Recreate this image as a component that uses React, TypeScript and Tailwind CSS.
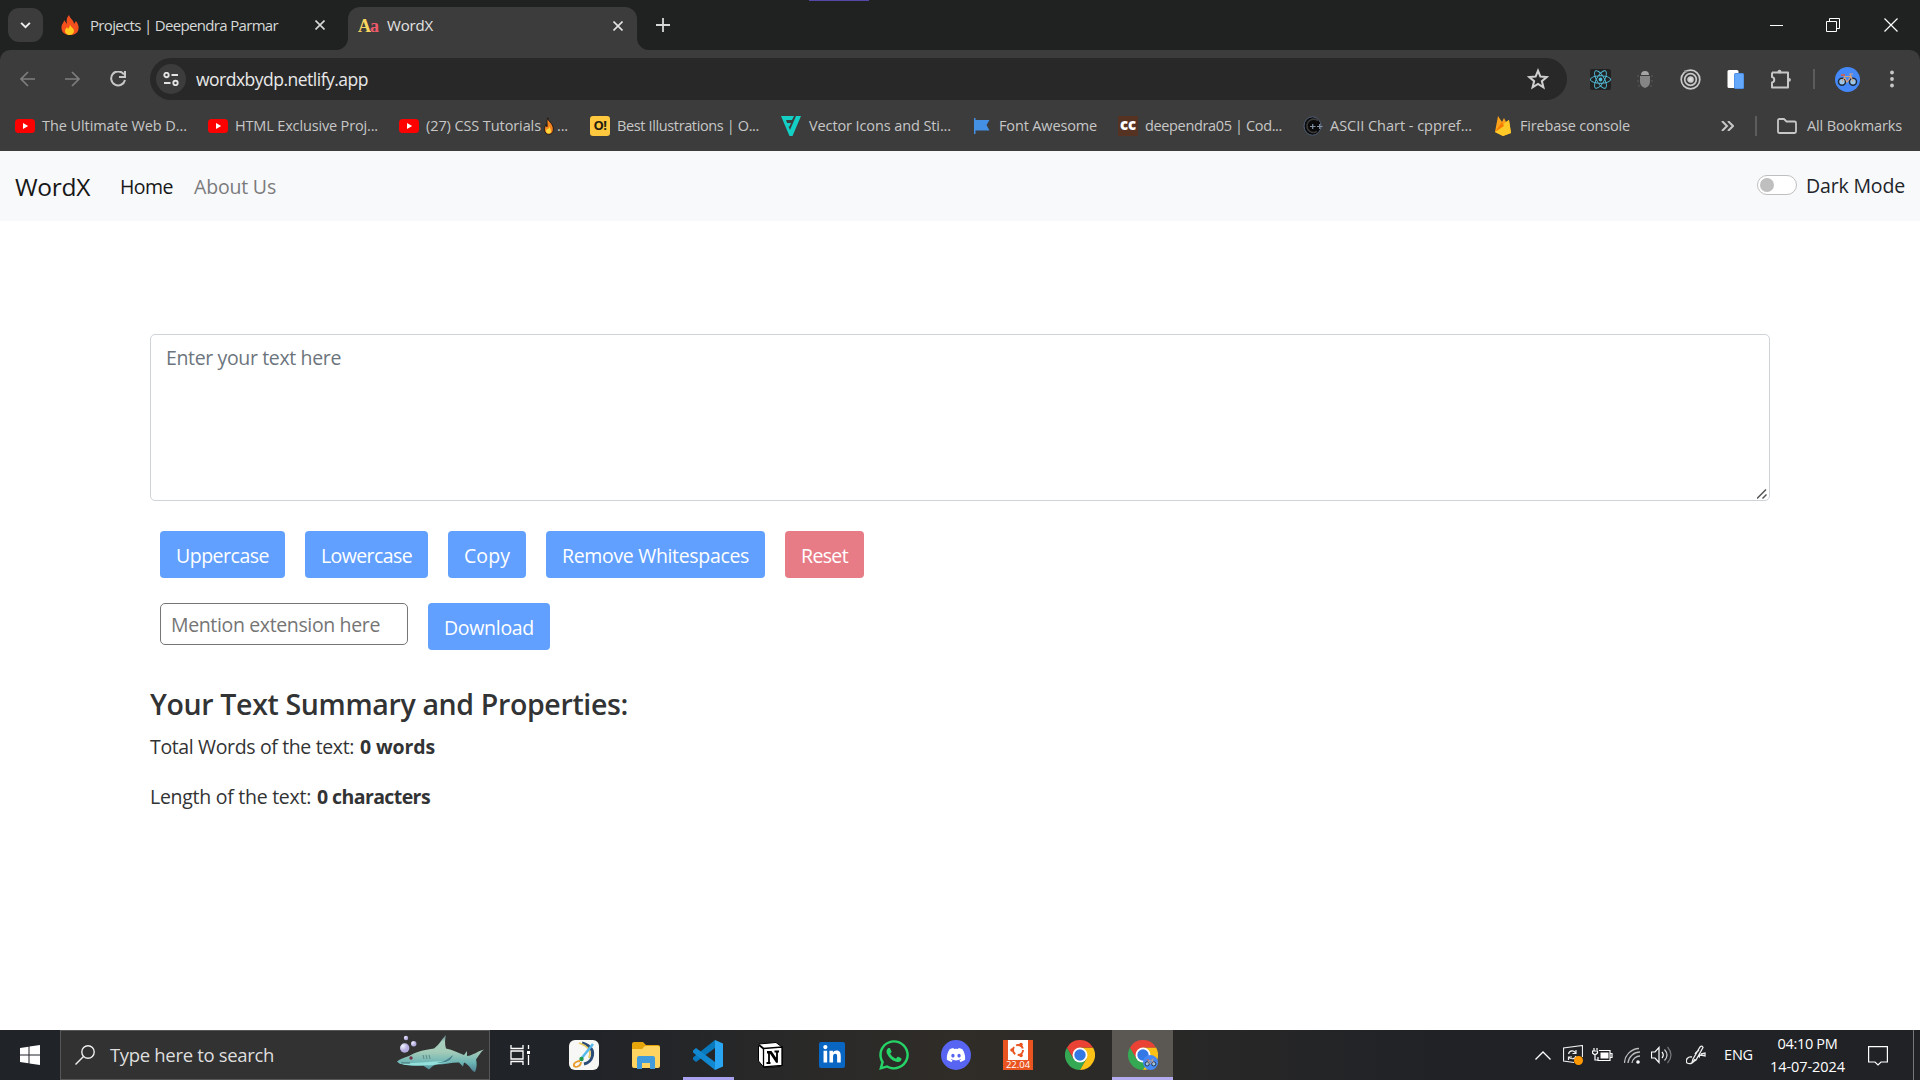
import React, { useLayoutEffect, useRef, useState } from 'react';
import { FaDiscord, FaLinkedinIn, FaReact, FaWhatsapp } from 'react-icons/fa';

/* Single line label whose tracking adapts to the width of its box. */
function Fit({ children, className }: { children: string; className: string }) {
  const box = useRef<HTMLSpanElement>(null);
  const text = useRef<HTMLSpanElement>(null);
  const [track, setTrack] = useState(0);
  useLayoutEffect(() => {
    if (!box.current || !text.current) return;
    const gap = box.current.clientWidth - text.current.getBoundingClientRect().width;
    setTrack(gap / children.length);
  }, [children]);
  return (
    <span ref={box} className={'block shrink-0 whitespace-nowrap ' + className}>
      <span ref={text} style={{ letterSpacing: track + 'px' }}>{children}</span>
    </span>
  );
}

function Fire({ className }: { className: string }) {
  return (
    <svg viewBox="0 0 18 20" className={className}>
      <path d="M8 0c1 4 5 5 5 9l2-3c2 3 3 5 2.500 8-.6 4-4 6-8.500 6S.500 17.500.500 13 3 8 3 5l3 4C5 5 6 2 8 0z" fill="#f4501e" />
      <path d="M9 9c0 3 4 4 4 7 0 2-2 4-4.500 4S4 18 4 16c0-2 1.500-2.500 2-4l1 2c1-1 2-3 2-5z" fill="#ffc81f" />
    </svg>
  );
}

function OutlinedFire({ className }: { className: string }) {
  return (
    <svg viewBox="0 0 13 22" className={className} stroke="#111" strokeWidth="1">
      <path d="M5 1c0 4 5 6 6 10 2 5 0 10-4.500 10S0 17 1.500 12L3 9l1 3C5 9 3 5 5 1z" fill="#f5811f" />
      <path d="M7 11c0 3 2.500 4 2 7-1 3-5 3-6 0-.5-2 1-3 1-4l1 1c1-1 2-2 2-4z" fill="#ffd93b" stroke="none" />
    </svg>
  );
}

function Cross({ className }: { className: string }) {
  return (
    <svg viewBox="0 0 10 10" className={className} stroke="currentColor" strokeWidth="1.600">
      <path d="M.5.5l9 9M9.500.5l-9 9" />
    </svg>
  );
}

function TabStrip() {
  return (
    <div className="relative flex h-[50px] items-center bg-[#1f2221] text-[#d6d8d8]">
      <div className="absolute left-[809px] top-0 h-px w-[60px] bg-[#5646a8]" />
      <div className="ml-2 flex h-[34px] w-[35px] items-center justify-center rounded-[11px] bg-[#3c3c3c]">
        <svg viewBox="0 0 12 8" className="h-[7px] w-[11px]" fill="none" stroke="#eee" strokeWidth="2.200"><path d="M1 1l5 5 5-5" /></svg>
      </div>
      <div className="ml-[18px] flex w-[287px] items-center">
        <Fire className="h-5 w-[18px]" />
        <Fit className="ml-[11px] w-[188px] text-[15px]">Projects | Deependra Parmar</Fit>
        <Cross className="ml-[37px] size-[10px]" />
      </div>
      <div className="relative mt-[7px] flex h-[43px] w-[289px] items-center self-start rounded-t-[12px] bg-[#3c3c3c] pb-[8px] pt-[2px] text-[#e3e3e3]">
        <svg viewBox="0 0 12 12" className="absolute -left-3 bottom-0 size-3"><path d="M12 0v12H0A12 12 0 0 0 12 0z" fill="#3c3c3c" /></svg>
        <svg viewBox="0 0 12 12" className="absolute -right-3 bottom-0 size-3"><path d="M0 0v12h12A12 12 0 0 1 0 0z" fill="#3c3c3c" /></svg>
        <span className="ml-[10px] w-5 whitespace-nowrap font-['Liberation_Serif'] text-[18px] font-bold leading-none tracking-[-1px] text-[#f7d560]">A<span className="text-[#ee5a6c]">a</span></span>
        <Fit className="ml-[9px] w-[46px] text-[15px]">WordX</Fit>
        <Cross className="ml-[180px] size-[10px]" />
      </div>
      <svg viewBox="0 0 14 14" className="ml-[19px] size-[14px]" stroke="#d6d8d8" strokeWidth="1.800"><path d="M7 0v14M0 7h14" /></svg>
      <div className="ml-auto mr-[22px] flex items-center text-white">
        <div className="h-px w-[13px] bg-white" />
        <svg viewBox="0 0 14 14" className="ml-[43px] size-[14px]" fill="none" stroke="currentColor"><path d="M.5 3.500h10v10H.5zM3.500 3V.5h10v10h-3" /></svg>
        <svg viewBox="0 0 14 14" className="ml-[44px] size-[14px]" stroke="currentColor" strokeWidth="1.200"><path d="M.5.5l13 13M13.500.5l-13 13" /></svg>
      </div>
    </div>
  );
}

function Bike() {
  return (
    <svg viewBox="0 0 25 25" className="size-[25px]">
      <circle cx="12.500" cy="12.500" r="12.500" fill="#4489f7" />
      <g fill="#9cc7ea" stroke="#1d2b3c" strokeWidth="1.500"><circle cx="7" cy="14.800" r="3.500" /><circle cx="18" cy="14.800" r="3.500" /></g>
      <path d="M7 14.500l3-5h6l-4 5.500L9 9M18 14.500L15 7h3" fill="none" stroke="#d5a07a" strokeWidth="1.200" />
      <path d="M6 8h4" stroke="#e45735" strokeWidth="1.500" />
    </svg>
  );
}

function Toolbar() {
  return (
    <div className="flex h-[58px] items-center text-[#c7c7c7]">
      <svg viewBox="0 0 16 16" className="ml-5 size-4" fill="none" stroke="#7d7d7d" strokeWidth="1.700"><path d="M15 8H1.500M8 1L1 8l7 7" /></svg>
      <svg viewBox="0 0 16 16" className="ml-[28px] size-4" fill="none" stroke="#7d7d7d" strokeWidth="1.700"><path d="M1 8h13.500M8 1l7 7-7 7" /></svg>
      <svg viewBox="0 0 16 16" className="ml-[30px] size-4" fill="none" stroke="currentColor" strokeWidth="2"><path d="M14 3.500A7 7 0 1 0 15 9M15 0v6H9" /></svg>
      <div className="ml-[24px] flex h-[42px] w-[1417px] items-center rounded-full bg-[#282828]">
        <div className="ml-[6px] flex size-[30px] items-center justify-center rounded-full bg-[#3c3c3c]">
          <svg viewBox="0 0 16 14" className="h-[14px] w-4" fill="none" stroke="#e3e3e3" strokeWidth="1.900"><circle cx="3.500" cy="3" r="2.200" /><path d="M8.500 3H15M1 11h6.500" /><circle cx="12.500" cy="11" r="2.200" /></svg>
        </div>
        <Fit className="ml-[10px] w-[172px] text-[17.500px] text-[#e8e8e8]">wordxbydp.netlify.app</Fit>
        <svg viewBox="0 0 24 24" className="ml-auto mr-[18px] size-[22px]" fill="none" stroke="#d0d0d0" strokeWidth="2.200"><path d="M12 3l2.600 6.400 6.900.5-5.300 4.400 1.700 6.700L12 17.300 6.100 21l1.700-6.700L2.500 9.900l6.900-.5z" /></svg>
      </div>
      <div className="ml-[23px] flex size-[21px] items-center justify-center rounded-[2px] bg-[#222]"><FaReact className="size-[21px] text-[#53c1de]" /></div>
      <svg viewBox="0 0 16 20" className="ml-[26px] h-5 w-4"><path d="M4 6a4 4 0 0 1 8 0z" fill="#a5a5a5" /><path d="M3 7h10v5c0 4-2 6-5 7-3-1-5-3-5-7z" fill="#858585" /><path d="M0 7h2M14 7h2M0 12h2M14 12h2M1 17h2M13 17h2" stroke="#5a5a5a" /></svg>
      <svg viewBox="0 0 21 21" className="ml-[27px] size-[21px]" fill="none" stroke="#cacaca" strokeWidth="1.700"><circle cx="10.500" cy="10.500" r="9.300" /><circle cx="10.500" cy="10.500" r="5.800" /><circle cx="10.500" cy="10.500" r="2.500" fill="#ddd" /><circle cx="5.500" cy="2.500" r="1.400" fill="#999" stroke="none" /></svg>
      <svg viewBox="0 0 17 20" className="ml-[26px] h-5 w-[17px]"><rect x=".5" y="1" width="11" height="18" rx="1.500" fill="#fff" /><rect x="7" y="4" width="10" height="16" rx="1.500" fill="#4d90e8" /><rect x="7.800" y="5" width="8.400" height="14" rx="1" fill="#64a8fb" /></svg>
      <svg viewBox="0 0 21 21" className="ml-[26px] size-[21px]" fill="none" stroke="#c7c7c7" strokeWidth="2" strokeLinejoin="round"><path d="M2 3.500h16v5.500M2 3.500V8c3 .5 3 5 0 5.500v5h16v-5.500" /><circle cx="9.500" cy="2.600" r="1.900" fill="#c7c7c7" stroke="none" /><path d="M18 7v7" /><circle cx="19" cy="10.800" r="1.900" fill="#c7c7c7" stroke="none" /></svg>
      <div className="ml-[22px] h-5 w-[2px] bg-[#5c5c5c]" />
      <div className="ml-[20px]"><Bike /></div>
      <svg viewBox="0 0 4 20" className="ml-[30px] h-5 w-1" fill="#c7c7c7"><circle cx="2" cy="3.500" r="1.900" /><circle cx="2" cy="10" r="1.900" /><circle cx="2" cy="16.500" r="1.900" /></svg>
    </div>
  );
}

function YouTube() {
  return (
    <svg viewBox="0 0 20 14" className="h-[14px] w-5 shrink-0"><rect width="20" height="14" rx="3.500" fill="#fe0000" /><path d="M8 4l5.200 3L8 10z" fill="#fff" /></svg>
  );
}

function Bookmarks() {
  return (
    <div className="flex h-[43px] items-center pb-[8px] text-[14.500px] text-[#c7c7c7]">
      <div className="ml-[15px] flex w-[193px] items-center gap-[7px]"><YouTube /><Fit className="w-[145px]">The Ultimate Web D...</Fit></div>
      <div className="flex w-[191px] items-center gap-[7px]"><YouTube /><Fit className="w-[143px]">HTML Exclusive Proj...</Fit></div>
      <div className="flex w-[191px] items-center gap-[7px]"><YouTube /><Fit className="w-[115px]">(27) CSS Tutorials</Fit><OutlinedFire className="-ml-[6px] h-[18px] w-[14px]" /><Fit className="-ml-[6px] w-[11px]">...</Fit></div>
      <div className="flex w-[191px] items-center gap-[7px]">
        <span className="flex size-5 items-center justify-center rounded-[3px] bg-[#ffc83e] text-[13px] font-bold tracking-[-.5px] text-[#221d10]">O!</span>
        <Fit className="w-[142px]">Best Illustrations | O...</Fit>
      </div>
      <div className="flex w-[192px] items-center gap-[8px]">
        <svg viewBox="0 0 20 20" className="h-5 w-5" fill="#14cfc4"><path d="M0 0h13l-2 4H5l1.200 3H10l-1.500 3.500H7.500L9 14 15 0h5l-8.500 20H8.500z" /></svg>
        <Fit className="w-[142px]">Vector Icons and Sti...</Fit>
      </div>
      <div className="flex w-[145px] items-center gap-[9px]">
        <svg viewBox="0 0 17 16" className="h-4 w-[17px]" fill="#4490e5"><path d="M1 0h1.500v2h14l-3 5 3 5.500h-14V16H1z" /></svg>
        <Fit className="w-[98px]">Font Awesome</Fit>
      </div>
      <div className="flex w-[185px] items-center gap-[7px]">
        <span className="flex size-5 items-center justify-center bg-[#553222] pb-[2px] text-[15px] font-extrabold leading-none text-white">cc</span>
        <Fit className="w-[137px]">deependra05 | Cod...</Fit>
      </div>
      <div className="flex w-[192px] items-center gap-[7px]">
        <svg viewBox="0 0 20 20" className="size-5" fill="none"><ellipse cx="9.500" cy="10" rx="8.500" ry="9.200" fill="#0a0a0b" stroke="#52617a" strokeWidth="1" /><path d="M15 4.500C9 1 4 5 4 10s5 8 10 5.500" stroke="#3c3c3c" strokeWidth="1.500" /><path d="M7 10.500h5.500M9.700 8v5M14 10.500h5.500M16.700 8v5" stroke="#8492a6" strokeWidth="1.200" /></svg>
        <Fit className="w-[142px]">ASCII Chart - cppref...</Fit>
      </div>
      <div className="flex items-center gap-[9px]">
        <svg viewBox="0 0 16 20" className="h-5 w-4"><path d="M0 16L3 0l4 6 2-4 2 4 3-2 2 13-8 3z" fill="#fba21b" /><path d="M0 16L11 6l3-2 2 13-8 3z" fill="#ffca28" /><path d="M0 16L7 6l2 4z" fill="#f57c00" /></svg>
        <Fit className="w-[110px]">Firebase console</Fit>
      </div>
      <div className="ml-auto mr-[18px] flex items-center">
        <svg viewBox="0 0 13 10" className="h-[10px] w-[13px]" fill="none" stroke="#c7c7c7" strokeWidth="2"><path d="M1 0l5 5-5 5M7 0l5 5-5 5" /></svg>
        <div className="ml-[21px] h-5 w-[2px] bg-[#5c5c5c]" />
        <svg viewBox="0 0 20 16" className="ml-[20px] h-4 w-5" fill="none" stroke="#c7c7c7" strokeWidth="1.800" strokeLinejoin="round"><path d="M1 2.500Q1 1 2.500 1H7l2.500 2.500h8Q19 3.500 19 5v8.500q0 1.500-1.500 1.500h-15Q1 15 1 13.500z" /></svg>
        <Fit className="ml-[10px] w-[95px]">All Bookmarks</Fit>
      </div>
    </div>
  );
}

function Page() {
  const button = 'flex h-[47px] items-center justify-center rounded-[4px] bg-[#61a0ff] pt-[2px] font-medium text-white ';
  return (
    <div className="h-[879px] bg-white text-[19.500px]">
      <nav className="flex h-[70px] items-center bg-[#f8f9fb] pl-[15px] pr-[15px] pt-[2px] text-[#212529]">
        <Fit className="w-[75px] text-[24.500px] text-[#171717]">WordX</Fit>
        <Fit className="ml-[30px] w-[53px] text-[#171717]">Home</Fit>
        <Fit className="ml-[21px] w-[82px] text-[#7b7b7c]">About Us</Fit>
        <div className="ml-auto flex items-center pb-[3px]">
          <div className="-mt-px flex h-5 w-10 items-center rounded-full border border-[#bfbfbf] bg-white pl-[2px]"><div className="size-[14px] rounded-full bg-[#bfbfbf]" /></div>
          <Fit className="ml-[9px] w-[99px]">Dark Mode</Fit>
        </div>
      </nav>
      <main className="ml-[150px] w-[1620px] pt-[113px] text-[#323334]">
        <div className="relative h-[167px] rounded-[5px] border border-[#cfd3da] px-[15px] py-[8px] text-[#6c757d]">
          <Fit className="w-[175px] leading-[30px]">Enter your text here</Fit>
          <svg viewBox="0 0 10 10" className="absolute bottom-px right-[2px] size-[10px]" stroke="#555" strokeWidth="1.500"><path d="M0 9.500L9 .5M5.500 9.500l4-4" /></svg>
        </div>
        <div className="mt-[30px] flex gap-5 pl-[10px]">
          <div className={button + 'w-[125px]'}><Fit className="w-[93px]">Uppercase</Fit></div>
          <div className={button + 'w-[123px]'}><Fit className="w-[91px]">Lowercase</Fit></div>
          <div className={button + 'w-[78px]'}><Fit className="w-[46px]">Copy</Fit></div>
          <div className={button + 'w-[219px]'}><Fit className="w-[187px]">Remove Whitespaces</Fit></div>
          <div className="flex h-[47px] w-[79px] items-center justify-center rounded-[4px] bg-[#e77c87] pt-[2px] font-medium text-white"><Fit className="w-[47px]">Reset</Fit></div>
        </div>
        <div className="mt-[25px] flex gap-5 pl-[10px]">
          <div className="flex h-[42px] w-[248px] items-center rounded-[5px] border border-[#767676] pl-[10px] pt-px text-[#757575]"><Fit className="w-[209px]">Mention extension here</Fit></div>
          <div className={button + 'w-[122px]'}><Fit className="w-[90px] pt-px">Download</Fit></div>
        </div>
        <h2 className="mt-[36px] font-semibold"><Fit className="w-[478px] text-[28.500px] leading-[36px]">Your Text Summary and Properties:</Fit></h2>
        <p className="mt-[10px] flex leading-[30px]"><Fit className="w-[204px]">Total Words of the text:</Fit><Fit className="ml-[6px] w-[75px] font-bold">0 words</Fit></p>
        <p className="mt-[20px] flex leading-[30px]"><Fit className="w-[161px]">Length of the text:</Fit><Fit className="ml-[6px] w-[113px] font-bold">0 characters</Fit></p>
      </main>
    </div>
  );
}

function Shark() {
  return (
    <svg viewBox="0 0 88 40" className="h-10 w-[88px]">
      <defs>
        <linearGradient id="skin" x1="0" y1="0" x2="0" y2="1"><stop offset="0" stopColor="#587d8c" /><stop offset=".18" stopColor="#a9d0bf" /><stop offset=".45" stopColor="#a5ccb8" /><stop offset=".75" stopColor="#6cb5b5" /><stop offset="1" stopColor="#4d7f92" /></linearGradient>
        <radialGradient id="bubble" cx=".3" cy=".3"><stop offset="0" stopColor="#eef4ff" /><stop offset="1" stopColor="#b5acdf" /></radialGradient>
      </defs>
      <g fill="url(#bubble)"><circle cx="7.700" cy="13" r="4.700" /><circle cx="16.700" cy="8.800" r="2.700" /><circle cx="9" cy="3" r="2.200" /></g>
      <path d="M0 26.500C3 24 7 23 12 21c5-3 12-6 25-7.500C42 10 45 4 49 0c-1 4-1.500 9 0 13.500 7 1.500 12 4 18 6.500l3-4v5c6-.5 11-5 17-6.500-3 2-5 6-8 10 1 4 1 8-1 12.500-4-1-5-7-11-9.500l-1 4-4-4c-6-.5-13 2-22 2-3 .5-5 2-8 5l-6-4c-6 .5-11 .5-17-.5-3-1-7-1-9-3.500z" fill="url(#skin)" />
      <path d="M1 27.500c14 2.500 32-2 52-1-6 1.500-11 2.500-17 3.500-11 .5-29 1.500-35-2.500z" fill="#93e0da" />
      <path d="M40 27.500c6 0 11-3 16-7.500-2 6-8 8.500-16 7.500z" fill="#477f8c" />
      <path d="M26 20l1 4M29 20l1 4M32 20l1 4" stroke="#5e8982" />
      <circle cx="14" cy="23" r="1.700" fill="#743448" /><path d="M4 28h9" stroke="#41666d" />
    </svg>
  );
}

function Chrome() {
  return (
    <svg viewBox="0 0 30 30" className="size-[30px]">
      <path d="M2 7.500l6.500 11.300L15 22.500l6.500-3.700L15 30A15 15 0 0 1 2 7.500z" fill="#34a853" />
      <path d="M15 7.500h13A15 15 0 0 1 15 30l6.500-11.200z" fill="#fbc116" />
      <path d="M2 7.500A15 15 0 0 1 28 7.500H15L8.500 18.800z" fill="#ea4335" />
      <circle cx="15" cy="15" r="7.500" fill="#fff" /><circle cx="15" cy="15" r="5.700" fill="#3478e5" />
    </svg>
  );
}

function Taskbar() {
  return (
    <div className="flex h-[50px] items-center bg-linear-to-r from-[#202328] from-30% via-[#302d28] via-50% to-[#202226] to-75% text-white">
      <svg viewBox="0 0 20 20" className="ml-5 size-5" fill="#fff"><path d="M0 3l8.500-1.300v7.800H0zM9.500 1.500L20 0v9.500H9.500zM0 10.500h8.500v7.800L0 17zM9.500 10.500H20V20L9.500 18.500z" /></svg>
      <div className="ml-5 flex h-[50px] w-[430px] items-center border border-[#575757] bg-[#323232]">
        <svg viewBox="0 0 20 20" className="ml-[14px] size-5" fill="none" stroke="#eee" strokeWidth="1.400"><circle cx="13" cy="7" r="6.200" /><path d="M8.500 11.500L.5 19.500" /></svg>
        <Fit className="ml-[15px] w-[164px] text-[18.500px] text-[#dedede]">Type here to search</Fit>
        <div className="ml-[123px]"><Shark /></div>
      </div>
      <svg viewBox="0 0 20 20" className="ml-5 size-5" fill="none" stroke="#fff" strokeWidth="1.300"><path d="M1 0v3.500h12V0M1 6h12v8H1zM1 20v-3.500h12V20M18.500 0v4M18.500 10v10" /><path d="M17 6h3v3h-3z" fill="#fff" stroke="none" /></svg>
      <svg viewBox="0 0 30 30" className="ml-[39px] size-[30px]">
        <rect width="30" height="30" rx="6" fill="#f7f7f5" />
        <path d="M13 3c9 3 12 8 10 14-1 4-4 6-8 7" fill="none" stroke="#294b78" strokeWidth="3" /><path d="M10 3c9 3 13 8 10 15" fill="none" stroke="#e9cb60" strokeWidth="1.800" />
        <path d="M24 4L12 19" stroke="#55b9ed" strokeWidth="2.500" /><circle cx="12.500" cy="19" r="2.200" fill="#229b4e" /><path d="M11 21c-3 0-7 2-6 5 2 2 7 0 7-4" fill="none" stroke="#e99b2c" strokeWidth="1.800" />
      </svg>
      <svg viewBox="0 0 28 28" className="ml-[33px] size-7"><path d="M0 3q0-2 2-2h9l3 3h12q2 0 2 2v3H0z" fill="#e5a50a" /><path d="M0 8h10l3-3h13q2 0 2 2v18q0 2-2 2H2q-2 0-2-2z" fill="#ffd460" /><path d="M5 28V17q0-2 2-2h14q2 0 2 2v11h-5v-6h-8v6z" fill="#429cdc" /></svg>
      <div className="ml-[23px] flex h-[50px] w-[51px] flex-col items-center justify-between">
        <svg viewBox="0 0 30 30" className="mt-[10px] size-[30px] -translate-x-px"><path d="M22 0v8L3 22 0 19.500v-2z" fill="#0879bd" /><path d="M0 10.500L3 8l19 14v8L0 12.500z" fill="#1188d0" /><path d="M22 0l8 3.500v23L22 30z" fill="#29a5f2" /></svg>
        <div className="h-[3px] w-full bg-[#a9a0ee]" />
      </div>
      <svg viewBox="0 0 26 26" className="ml-[23px] size-[26px]"><path d="M2 2l17-1.500L25 5v18l-2 1.500L7 25.500 1.500 19V3.500z" fill="#fff" stroke="#000" /><path d="M6.500 6.500L25 5v18.500L6.500 25z" fill="#fff" stroke="#000" strokeWidth="1.300" /><path d="M2 3l5 4M10 10h4l6 8.500V9M10 10.500h2V21M9.500 21h4M17.500 9.500h4.500M13 10l7 10.500" fill="none" stroke="#000" strokeWidth="1.800" /></svg>
      <div className="ml-[36px] flex size-[26px] items-center justify-center rounded-[2px] bg-[#0966c2]"><FaLinkedinIn className="size-[20px]" /></div>
      <FaWhatsapp className="ml-[32px] size-[34px] text-[#25d366]" />
      <div className="ml-[30px] flex size-[30px] items-center justify-center rounded-full bg-[#5865f2]"><FaDiscord className="size-[20px]" /></div>
      <div className="ml-[32px] flex h-[30px] w-[30px] flex-col items-center bg-[#e95420]">
        <div className="flex h-5 w-5 items-center justify-center bg-white"><svg viewBox="0 0 16 16" className="size-4" fill="none" stroke="#e95420" strokeWidth="2"><circle cx="8" cy="8" r="5" strokeDasharray="8 2.500" /><g fill="#e95420" stroke="none"><circle cx="2" cy="8" r="1.800" /><circle cx="11" cy="2.500" r="1.800" /><circle cx="11" cy="13.500" r="1.800" /></g></svg></div>
        <span className="text-[9.500px] leading-[10px]">22.04</span>
      </div>
      <div className="ml-8"><Chrome /></div>
      <div className="relative ml-[17px] flex h-[50px] w-[61px] flex-col items-center justify-between bg-[#5b5854]">
        <div className="relative mt-[10px]"><Chrome /><div className="absolute bottom-0 right-0 size-[15px] [&>svg]:size-[15px]"><Bike /></div></div>
        <div className="absolute bottom-0 h-[3px] w-full bg-[#b3aaf0]" />
      </div>
      <div className="ml-auto flex h-[50px] items-center">
        <svg viewBox="0 0 16 9" className="h-[9px] w-4" fill="none" stroke="#fff" strokeWidth="1.300"><path d="M.5 8.500L8 1l7.500 7.500" /></svg>
        <svg viewBox="0 0 20 20" className="ml-3 size-5" fill="none" stroke="#eee" strokeWidth="1.200"><path d="M11 17.500L.5 16V3L19.500.5V12" /><path d="M5.500 9c1-4 6-4 7-1M13 5v3.500H9.500M13 11c-1 4-6 3-7.500 1M5.500 15v-3H9" /><circle cx="15.500" cy="15.500" r="4.500" fill="#ff9800" stroke="none" /></svg>
        <svg viewBox="0 0 21 14" className="ml-[9px] h-[14px] w-[21px]" fill="none" stroke="#fff" strokeWidth="1.200"><path d="M7 2.500h11v10H6V9M18 5.500h2v4h-2M2 0v3M5 0v2M.5 3h5v2q-2.500 3-5 0zM3 6.500V12h3" /><path d="M8.500 4.500h8v6h-8z" fill="#fff" stroke="none" /></svg>
        <svg viewBox="0 0 17 17" className="ml-[11px] size-[17px]" fill="none" stroke="#bbb" strokeWidth="1.300"><path d="M.5 16A15 15 0 0 1 15 1.500M4 16A12 12 0 0 1 16 5M8 16A8 8 0 0 1 16 9" /><circle cx="14" cy="15" r="1.800" fill="#fff" stroke="none" /></svg>
        <svg viewBox="0 0 21 18" className="ml-[10px] h-[18px] w-[21px]" fill="none" stroke="#fff" strokeWidth="1.200"><path d="M.5 6H4l4-4.500v15L4 12H.5zM11 6q2.500 3 0 6" /><path d="M13.500 3.500q5 5.500 0 11" stroke="#ccc" /><path d="M16.500 1q7 8 0 16" stroke="#777" /></svg>
        <svg viewBox="0 0 20 20" className="ml-[14px] size-5" fill="none" stroke="#eee" strokeWidth="1.300"><path d="M7 14L14 2q2-2 3 .5L10 15l-4 2.500zM6 12c-4-1-7 3-5 6 4 2 7-1 8-4M9 9c1-2 3-4 4-3M15 9l4-1v3l-4-1c-2 0-3 2-1 2" /></svg>
        <Fit className="ml-[18px] w-[29px] text-[14.500px]">ENG</Fit>
        <div className="ml-[17px] flex w-[75px] flex-col items-center text-[14.500px] leading-[23px]"><Fit className="w-[60px]">04:10 PM</Fit><Fit className="w-[75px]">14-07-2024</Fit></div>
        <svg viewBox="0 0 20 20" className="ml-[23px] mt-px size-5" fill="none" stroke="#fff" strokeWidth="1.200"><path d="M.6.6h18.800V16H13l-3 3-3-3H.6z" /></svg>
        <div className="ml-[25px] mr-[6px] h-[50px] w-px bg-[#74767a]" />
      </div>
    </div>
  );
}

export default function App() {
  return (
    <div className="h-[1080px] w-[1920px] overflow-hidden bg-[#1f2221] font-['Open_Sans',sans-serif]">
      <TabStrip />
      <div className="h-[101px] rounded-t-[10px] bg-[#3c3c3c]"><Toolbar /><Bookmarks /></div>
      <Page />
      <Taskbar />
    </div>
  );
}
